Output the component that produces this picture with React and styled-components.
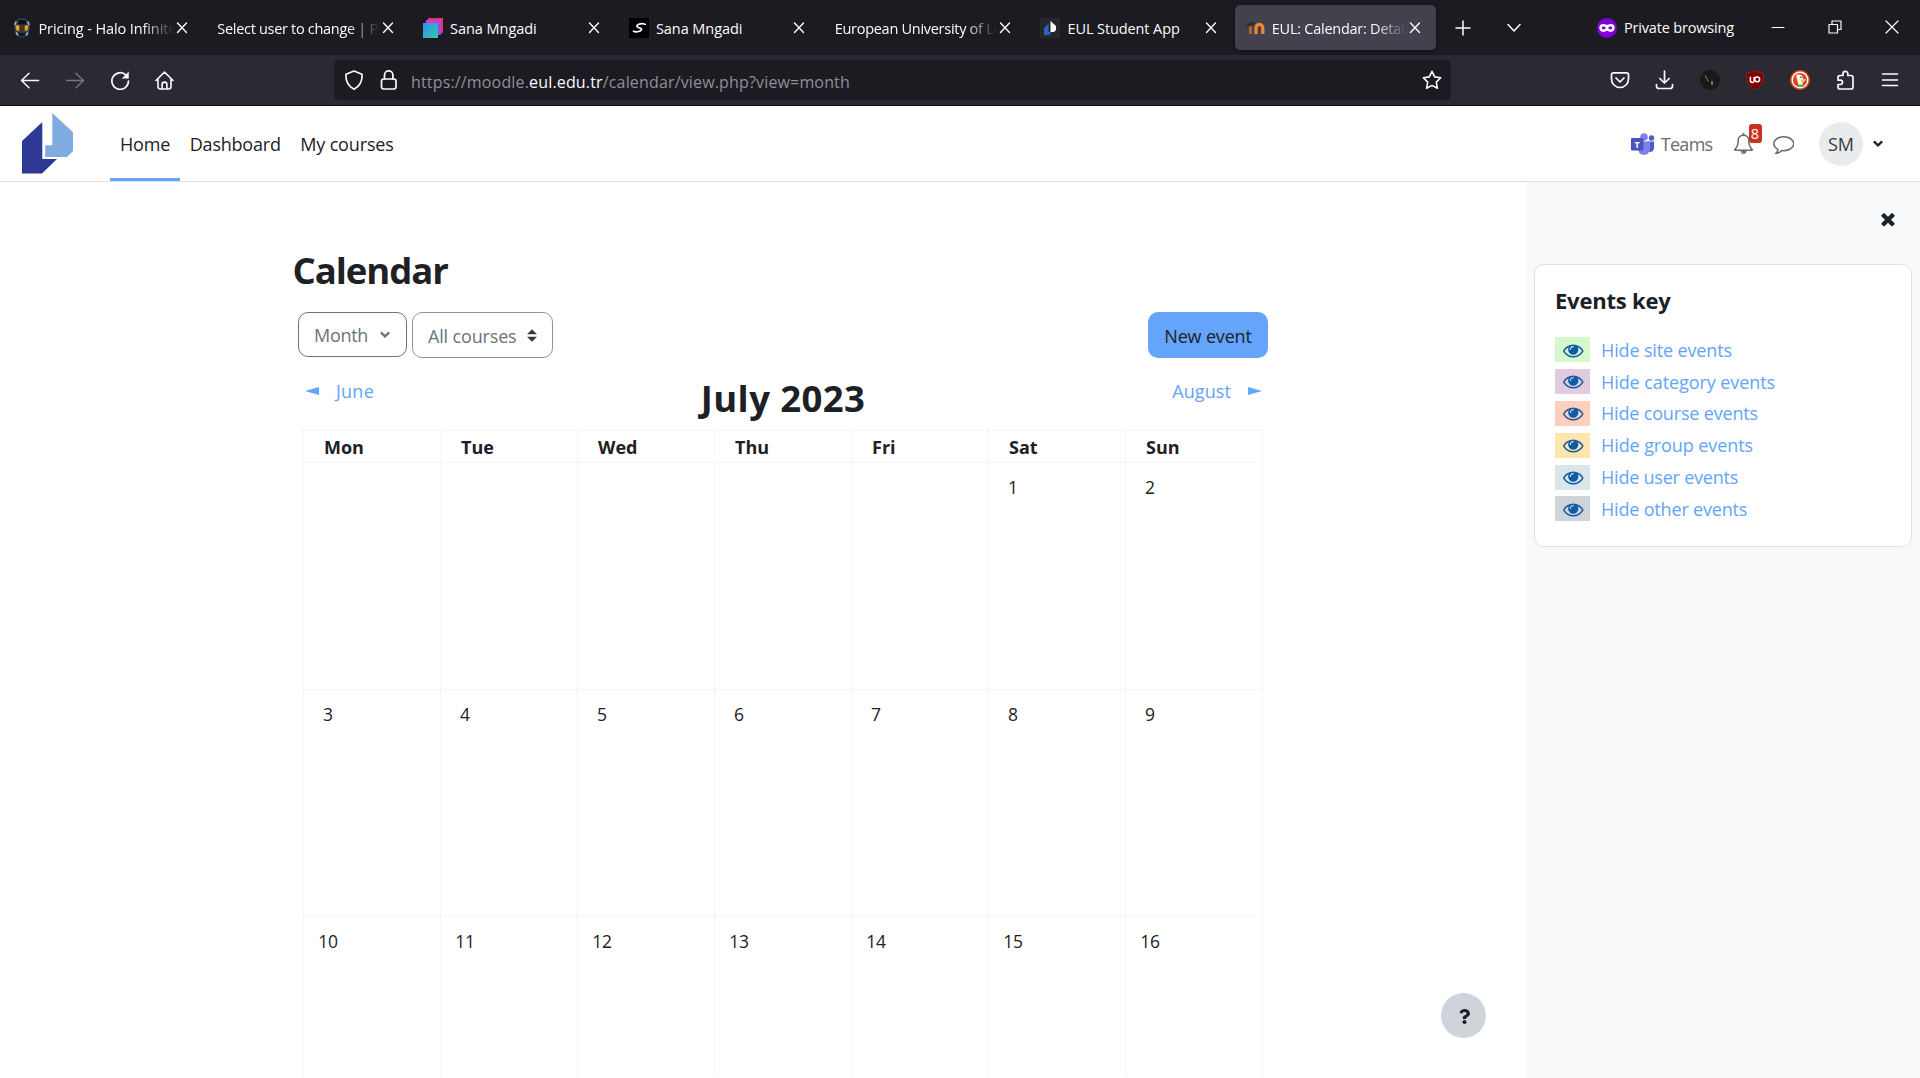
import React from "react";
import styled, { createGlobalStyle } from "styled-components";
import { FaQuestion } from "react-icons/fa";

const GlobalStyle = createGlobalStyle`
  *, *::before, *::after { box-sizing: border-box; }
  html, body { margin: 0; padding: 0; overflow: hidden; }
  body {
    font-family: "Open Sans", "Noto Sans", "Liberation Sans", sans-serif;
    font-size: 18px;
    color: #1d2125;
    background: #fff;
  }
  svg { display: block; flex: none; }
`;

const Label = styled.span`
  white-space: nowrap;
  letter-spacing: ${(p) => p.$ls || 0}px;
`;

const Screen = styled.div`
  width: 1920px;
  height: 1078px;
  display: flex;
  flex-direction: column;
  overflow: hidden;
`;

/* ---------- browser chrome ---------- */

const TabStrip = styled.div`
  height: 55px;
  flex: none;
  display: flex;
  align-items: center;
  background: #1c1b22;
  color: #fbfbfe;
`;

const Tabs = styled.div`
  display: flex;
  gap: 4.8px;
`;

const Tab = styled.div`
  width: 201px;
  height: 45px;
  padding: 1px ${(p) => (p.$active ? 15 : 13)}px 0 ${(p) => (p.$active ? 10 : 11.5)}px;
  border-radius: 5px;
  display: flex;
  align-items: center;
  gap: 7px;
  background: ${(p) => (p.$active ? "#42414d" : "transparent")};
  box-shadow: ${(p) => (p.$active ? "0 0 4px rgba(0, 0, 0, 0.5)" : "none")};
`;

const TabTitle = styled(Label)`
  flex: 1;
  min-width: 0;
  margin-right: -7px;
  padding-top: 1px;
  overflow: hidden;
  font-size: 14.5px;
  line-height: 22px;
  mask-image: ${(p) => (p.$fade ? "linear-gradient(to left, transparent 2px, #000 34px)" : "none")};
`;

const TabTools = styled.div`
  display: flex;
  align-items: center;
  gap: 36px;
  margin-left: 19px;
`;

const PrivateMark = styled.div`
  display: flex;
  align-items: center;
  gap: 7px;
  margin-left: auto;
  font-size: 14.5px;
`;

const WindowControls = styled.div`
  display: flex;
  align-items: center;
  gap: 43px;
  margin: 0 21px 2px 37px;
`;

const NavBar = styled.div`
  height: 51px;
  flex: none;
  display: flex;
  align-items: center;
  background: #2b2a33;
  border-bottom: 1px solid #0c0c0d;
  color: #fbfbfe;
`;

const NavButtons = styled.div`
  display: flex;
  gap: 25px;
  width: 334px;
  padding-left: 20px;
`;

const UrlBar = styled.div`
  width: 1117px;
  height: 40px;
  padding: 0 9px 0 10px;
  display: flex;
  align-items: center;
  border-radius: 5px;
  background: #1c1b22;
`;

const UrlIcons = styled.div`
  display: flex;
  gap: 15px;
`;

const Url = styled(Label)`
  flex: 1;
  margin-left: 12px;
  padding-top: 3px;
  font-size: 16px;
  color: #8f8f9a;
  b { font-weight: 400; color: #fbfbfe; }
`;

const Extensions = styled.div`
  display: flex;
  gap: 25px;
  margin-left: auto;
  padding-right: 20px;
`;

/* ---------- site header ---------- */

const SiteHeader = styled.header`
  height: 76px;
  flex: none;
  display: flex;
  align-items: stretch;
  border-bottom: 1px solid #dee2e6;
  padding: 0 36px 0 22px;
`;

const LogoBox = styled.div`
  width: 88px;
  padding-top: 7px;
`;

const PrimaryNav = styled.nav`
  display: flex;
`;

const NavItem = styled.a`
  display: flex;
  align-items: center;
  padding: 3px 9.5px 0 10px;
  border-bottom: 3px solid ${(p) => (p.$active ? "#64a4fb" : "transparent")};
`;

const UserTools = styled.div`
  display: flex;
  align-items: center;
  margin-left: auto;
  color: #6a6b6c;
`;

const TeamsLink = styled.a`
  display: flex;
  align-items: center;
  gap: 6px;
  margin-right: 20px;
`;

const BellBox = styled.div`
  position: relative;
  margin-right: 19px;
`;

const Badge = styled.span`
  position: absolute;
  top: -9px;
  left: 16px;
  width: 13px;
  height: 19px;
  border-radius: 3px;
  background: #ca3120;
  color: #fff;
  font-size: 14.5px;
  line-height: 20px;
  text-align: center;
`;

const Avatar = styled.div`
  width: 44px;
  height: 44px;
  margin: 0 9px 0 25px;
  border-radius: 50%;
  background: #e9ecef;
  color: #343a40;
  display: flex;
  align-items: center;
  justify-content: center;
`;

/* ---------- page ---------- */

const Body = styled.div`
  flex: 1;
  min-height: 0;
  display: flex;
`;

const Main = styled.main`
  width: 1526px;
  padding: 66px 258px 0 294px;
  display: flex;
  flex-direction: column;
  overflow: hidden;
`;

const PageTitle = styled.h1`
  margin: 0 0 0 -1.5px;
  font-size: 36.5px;
  line-height: 44px;
  letter-spacing: -1.05px;
  font-weight: 700;
`;

const Controls = styled.div`
  display: flex;
  align-items: flex-start;
  gap: 5px;
  margin: 20px 0 18px 4px;
`;

const Picker = styled.button`
  width: ${(p) => p.$w}px;
  height: ${(p) => p.$h}px;
  padding: ${(p) => (p.$h > 45 ? 1 : 0)}px 15px 0;
  display: flex;
  align-items: center;
  justify-content: space-between;
  border: 1px solid ${(p) => p.$edge};
  border-radius: 10px;
  background: #fff;
  color: #6a737b;
  font: inherit;
`;

const PrimaryButton = styled.button`
  width: 120px;
  height: 46px;
  margin-left: auto;
  padding: 1px 0 0;
  border: 0;
  border-radius: 10px;
  background: #64a4fb;
  color: #1d2125;
  font: inherit;
`;

const MonthNav = styled.div`
  height: 54px;
  flex: none;
  display: grid;
  grid-template-columns: 1fr auto 1fr;
  margin: 0 5px 0 9px;
`;

const MonthLink = styled.a`
  display: flex;
  align-items: center;
  justify-content: ${(p) => (p.$end ? "flex-end" : "flex-start")};
  gap: 17px;
  height: 30px;
  padding: 0 ${(p) => (p.$end ? 1 : 0)}px 0 ${(p) => (p.$end ? 0 : 2)}px;
  color: #64a4fb;
`;

const MonthTitle = styled.h2`
  margin: 0;
  font-size: 36.5px;
  line-height: 45px;
  letter-spacing: 0.4px;
  font-weight: 700;
`;

const Grid = styled.div`
  flex: none;
  display: grid;
  grid-template-columns: repeat(7, 137px);
  grid-template-rows: 32px 227px 226px 226px;
  width: 960px;
  margin-left: 9px;
  border-right: 1px dotted #eceef0;
`;

const WeekDay = styled.div`
  border-top: 1px dotted #eceef0;
  border-left: 1px dotted #eceef0;
  padding: 2px 0 0 20px;
  font-weight: 700;
  line-height: 28px;
`;

const DayCell = styled.div`
  border-top: 1px dotted #eceef0;
  border-left: 1px dotted #eceef0;
  padding-top: ${(p) => (p.$low ? 1 : 0)}px;
`;

const DayNumber = styled.div`
  width: 48px;
  line-height: 48px;
  text-align: center;
  font-size: 17.5px;
  letter-spacing: -0.2px;
`;

const HelpButton = styled.button`
  position: absolute;
  left: 1441px;
  top: 993px;
  width: 45px;
  height: 45px;
  border: 0;
  border-radius: 50%;
  background: #ced4da;
  color: #1d2125;
  display: flex;
  align-items: center;
  justify-content: center;
  padding: 1px 0 0 1px;
`;

const Drawer = styled.aside`
  width: 394px;
  background: #f8f9fa;
  padding: 27px 8px 0;
  display: flex;
  flex-direction: column;
`;

const DrawerTop = styled.div`
  display: flex;
  justify-content: flex-end;
  height: 55px;
  padding-right: 14px;
`;

const Card = styled.section`
  height: 283px;
  padding: 20px 21px 0 20px;
  border: 1px solid #dee2e6;
  border-radius: 10px;
  background: #fff;
`;

const CardTitle = styled.h3`
  margin: 0 0 19px 0;
  font-size: 22px;
  line-height: 30px;
  letter-spacing: -0.22px;
  font-weight: 700;
`;

const KeyRow = styled.div`
  display: flex;
  align-items: center;
  gap: 11px;
  height: 31.8px;
  color: #64a4fb;
`;

const Swatch = styled.span`
  width: 35px;
  height: 25px;
  display: flex;
  align-items: center;
  justify-content: center;
  padding-left: 2px;
  background: ${(p) => p.$color};
  color: #0f5ca5;
`;

/* ---------- icons ---------- */

const Line = ({ w = 20, h = w, box = `0 0 ${w} ${h}`, sw = 1.5, color = "currentColor", children }) => (
  <svg width={w} height={h} viewBox={box} fill="none" stroke={color} strokeWidth={sw} strokeLinecap="round" strokeLinejoin="round">
    {children}
  </svg>
);

const Solid = ({ size, d, color = "currentColor" }) => (
  <svg width={size} height={size} viewBox="0 0 1792 1792" fill={color}>
    <path d={d} />
  </svg>
);

const EYE =
  "M1664 960q-152-236-381-353 61 104 61 225 0 185-131.5 316.5t-316.5 131.5-316.5-131.5-131.5-316.5q0-121 61-225-229 117-381 353 133 205 333.5 326.5t434.5 121.5 434.5-121.5 333.5-326.5zm-720-384q0-20-14-34t-34-14q-125 0-214.5 89.5t-89.5 214.5q0 20 14 34t34 14 34-14 14-34q0-86 61-147t147-61q20 0 34-14t14-34zm848 384q0 34-20 69-140 230-376.5 368.5t-499.5 138.5-499.5-139-376.5-368q-20-35-20-69t20-69q140-229 376.5-368t499.5-139 499.5 139 376.5 368q20 35 20 69z";
const BELL =
  "M912 1696q0-16-16-16-59 0-101.5-42.5t-42.5-101.5q0-16-16-16t-16 16q0 73 51.5 124.5t124.5 51.5q16 0 16-16zm-666-288h1300q-266-300-266-832 0-51-24-105t-69-103-121.5-80.5-169.5-31.5-169.5 31.5-121.5 80.5-69 103-24 105q0 532-266 832zm1482 0q0 52-38 90t-90 38h-448q0 106-75 181t-181 75-181-75-75-181h-448q-52 0-90-38t-38-90q50-42 91-88t85-119.5 74.5-158.5 50-206 19.5-260q0-152 117-282.5t307-158.5q-8-19-8-39 0-40 28-68t68-28 68 28 28 68q0 20-8 39 190 28 307 158.5t117 282.5q0 139 19.5 260t50 206 74.5 158.5 85 119.5 91 88z";
const COMMENT =
  "M896 384q-204 0-381.5 69.5t-282 187.5-104.5 255q0 112 71.5 213.5t201.5 175.5l87 50-27 96q-24 91-70 172 152-63 275-171l43-38 57 6q69 8 130 8 204 0 381.5-69.5t282-187.5 104.5-255-104.5-255-282-187.5-381.5-69.5zm896 512q0 174-120 321.5t-326 233-450 85.5q-70 0-145-8-198 175-460 242-49 14-114 22h-5q-15 0-27-10.5t-16-27.5v-1q-3-4-.5-12t2-10 4.5-9.5l6-9 7-8.5 8-9q7-8 31-34.5t34.5-38 31-39.5 32.5-51 27-59 26-76q-157-89-247.5-220t-90.5-281q0-174 120-321.5t326-233 450-85.5 450 85.5 326 233 120 321.5z";
const TIMES =
  "M1490 1322q0 40-28 68l-136 136q-28 28-68 28t-68-28l-294-294-294 294q-28 28-68 28t-68-28l-136-136q-28-28-28-68t28-68l294-294-294-294q-28-28-28-68t28-68l136-136q28-28 68-28t68 28l294 294 294-294q28-28 68-28t68 28l136 136q28 28 28 68t-28 68l-294 294 294 294q28 28 28 68z";

const TabClose = () => (
  <Line w={12} sw={1.4}><path d="M1.5 1l9 9.5M10.5 1l-9 9.5" /></Line>
);

const HelmetIcon = () => (
  <svg width="20" height="20" viewBox="0 0 20 20">
    <path d="M7 0.500h6l4 3.500 1 6-2 6-4 3.500H8L4 16l-2-6 1-6z" fill="#39465a" />
    <path d="M6.500 2h7l1 4.500h-9z" fill="#0e1119" />
    <path d="M4 3.500L2.800 7M16 3.500L17.200 7M4 14.500l2 3M16 14.500l-2 3" stroke="#a3b4ca" strokeWidth="1.500" />
    <path d="M3.500 7.500h4v5h-3zM16.500 7.500h-4v5h3z" fill="#f0a81c" />
    <path d="M7.500 7h5v6.500h-5z" fill="#4c3210" />
    <path d="M6 14.500h8l-1.500 4h-5z" fill="#151a24" />
  </svg>
);

const LayersIcon = () => (
  <svg width="20" height="20" viewBox="0 0 20 20">
    <defs>
      <linearGradient id="layer-c" x1="0" y1="0" x2="1" y2="1">
        <stop offset="0" stopColor="#2f8fe8" /><stop offset="1" stopColor="#35c9ae" />
      </linearGradient>
      <linearGradient id="layer-b" x1="0" y1="0" x2="1" y2="1">
        <stop offset="0" stopColor="#e23cc0" /><stop offset="1" stopColor="#8f4bf2" />
      </linearGradient>
    </defs>
    <path d="M5 0h15v15H5z" fill="#e0366f" />
    <path d="M3 2h15v15H3z" fill="url(#layer-b)" />
    <path d="M0 5h15v15H0z" fill="url(#layer-c)" />
  </svg>
);

const ScriptIcon = () => (
  <svg width="20" height="20" viewBox="0 0 20 20">
    <path d="M0 0h20v20H0z" fill="#000" />
    <path d="M16.500 7c0-2-7-1.800-8.500.5s5.500 2 4.500 4.200-6 2.800-8.500 1.300" fill="none" stroke="#fff" strokeWidth="1.600" />
  </svg>
);

const AppIcon = () => (
  <svg width="20" height="20" viewBox="0 0 20 20">
    <path d="M0 0h20v20H0z" fill="#26272c" />
    <path d="M8.500 5.500v8.500h3L9 17H4V10z" fill="#2465c4" />
    <path d="M10.500 3l5.500 5v4l-2 2h-3.500z" fill="#fff" />
  </svg>
);

const MoodleIcon = () => (
  <svg width="20" height="20" viewBox="0 0 20 20" fill="none">
    <path d="M5.500 16V7" stroke="#a7643a" strokeWidth="3" />
    <path d="M11 16V9.800a3.400 3.400 0 0 1 6.800 0V16" stroke="#ef8a2c" strokeWidth="3.200" />
    <path d="M1 6.500l7-2.500 3 1.500-6 3z" fill="#2d2c34" />
    <path d="M1.500 7v5" stroke="#35343c" />
  </svg>
);

const MaskIcon = () => (
  <svg width="20" height="20" viewBox="0 0 20 20">
    <circle cx="10" cy="10" r="10" fill="#8000d7" />
    <path d="M6.200 6C3.600 6 2.300 7.500 2.300 9.600c0 2.600 1.600 4.400 3.900 4.400 1.700 0 2.400-1.300 3.800-1.300s2.100 1.300 3.800 1.300c2.300 0 3.900-1.800 3.900-4.400C17.700 7.500 16.400 6 13.800 6c-1.700 0-2.600.8-3.800.8S7.900 6 6.200 6z" fill="#fff" />
    <ellipse cx="6.700" cy="10" rx="2" ry="1.400" fill="#8000d7" />
    <ellipse cx="13.300" cy="10" rx="2" ry="1.400" fill="#8000d7" />
  </svg>
);

const Logo = () => (
  <svg width="51" height="61" viewBox="0 0 51 61">
    <path d="M0 28L20.300 9v37H35L20 60.600H0z" fill="#2e3996" />
    <path d="M30.300 0L51 19.200V38l-6 6H23.200V32.200h7.100z" fill="#80abdf" />
  </svg>
);

const TeamsIcon = () => (
  <svg width="24" height="22" viewBox="0 0 24 22">
    <circle cx="20.500" cy="5" r="2.700" fill="#5059c9" />
    <path d="M16 8.500h7v7a4 4 0 0 1-7 2z" fill="#5059c9" />
    <circle cx="13" cy="4" r="3.800" fill="#7b83eb" />
    <path d="M7 8.500h12v7.500a6 6 0 0 1-12 0z" fill="#7b83eb" />
    <rect y="5" width="12.500" height="12.500" rx="1" fill="#4b53bc" />
    <text x="6.200" y="14.500" fontSize="9" fontWeight="700" textAnchor="middle" fill="#fff">T</text>
  </svg>
);

const Caret = ({ color = "#1d2125" }) => (
  <Line w={12} h={9} box="0 0 12 9" sw={2.3} color={color}><path d="M1.800 2.300L6 6.300l4.200-4" strokeLinecap="butt" strokeLinejoin="miter" /></Line>
);

/* ---------- data ---------- */

const TABS = [
  { icon: <HelmetIcon />, title: "Pricing - Halo Infinite", fade: true, ls: -0.1 },
  { title: "Select user to change | Python", fade: true, ls: -0.3 },
  { icon: <LayersIcon />, title: "Sana Mngadi", ls: -0.05 },
  { icon: <ScriptIcon />, title: "Sana Mngadi", ls: -0.05 },
  { title: "European University of Lefke", fade: true, ls: -0.28 },
  { icon: <AppIcon />, title: "EUL Student App", ls: -0.1 },
  { icon: <MoodleIcon />, title: "EUL: Calendar: Detailed", fade: true, active: true, ls: -0.25 },
];

const WEEKDAYS = ["Mon", "Tue", "Wed", "Thu", "Fri", "Sat", "Sun"];
const DAYS = ["", "", "", "", "", 1, 2, 3, 4, 5, 6, 7, 8, 9, 10, 11, 12, 13, 14, 15, 16];

const KEYS = [
  ["Hide site events", "#d6f8cd", -0.14],
  ["Hide category events", "#e0cbe0", -0.08],
  ["Hide course events", "#fecfbd", -0.17],
  ["Hide group events", "#fde6ae", -0.09],
  ["Hide user events", "#dae6ea", -0.22],
  ["Hide other events", "#ced4da", -0.18],
];

/* ---------- sections ---------- */

function BrowserTabs() {
  return (
    <TabStrip>
      <Tabs>
        {TABS.map((t, i) => (
          <Tab key={i} $active={t.active}>
            {t.icon}
            <TabTitle $ls={t.ls} $fade={t.fade}>{t.title}</TabTitle>
            <TabClose />
          </Tab>
        ))}
      </Tabs>
      <TabTools>
        <Line w={16} sw={1.5}><path d="M8 1v14M1 8h14" /></Line>
        <Line w={14} sw={1.5}><path d="M1 3.500L7 10l6-6.500" /></Line>
      </TabTools>
      <PrivateMark>
        <MaskIcon />
        <Label $ls={-0.17}>Private browsing</Label>
      </PrivateMark>
      <WindowControls>
        <Line w={14} sw={1.2}><path d="M1 7.500h12" /></Line>
        <Line w={14} sw={1.2}><path d="M1 4.500h8.500V13H1zM4 4.500V1h9v8.500H9.500" /></Line>
        <Line w={14} sw={1.2}><path d="M1 1l12 12M13 1L1 13" /></Line>
      </WindowControls>
    </TabStrip>
  );
}

function BrowserNav() {
  return (
    <NavBar>
      <NavButtons>
        <Line><path d="M18.500 10.500H1.500M9 3.300l-7.500 7.200 7.500 7.200" /></Line>
        <Line color="#77767f"><path d="M1.500 10.500h17M11 3.300l7.500 7.200-7.500 7.200" /></Line>
        <Line sw={1.7}><path d="M18.500 11A8.300 8.300 0 1 1 16 5.100" /><path d="M18.500 2.300v6h-6z" fill="currentColor" strokeWidth="0.500" /></Line>
        <Line sw={1.6}><path d="M1 10.500L9.500 2 18 10.500M3 9v7.500A2.500 2.500 0 0 0 5.500 19h8a2.500 2.500 0 0 0 2.500-2.500V9M7.100 19v-4.500a2.400 2.400 0 0 1 4.800 0V19" /></Line>
      </NavButtons>
      <UrlBar>
        <UrlIcons>
          <Line sw={1.7}><path d="M10 1L18 4.200c.5 6.300-2 11.800-8 15-6-3.200-8.500-8.700-8-15z" /></Line>
          <Line sw={1.7}><rect x="2.500" y="9" width="14.500" height="10" rx="2.200" /><path d="M5.500 9V5a4.200 4.200 0 0 1 8.400 0v4" /></Line>
        </UrlIcons>
        <Url $ls={0.16}>https://moodle.<b>eul.edu.tr</b>/calendar/view.php?view=month</Url>
        <Line sw={1.6}><path d="M10 1.300l2.700 5.600 6 .9-4.400 4.300 1.100 6.200L10 15.400l-5.400 2.900 1.100-6.200L1.300 7.800l6-.9z" /></Line>
      </UrlBar>
      <Extensions>
        <Line sw={1.7}><path d="M3.500 2.800h13a2 2 0 0 1 2 2V9a8.500 8.500 0 0 1-17 0V4.800a2 2 0 0 1 2-2z" /><path d="M6 8l4 4 4-4" /></Line>
        <Line sw={1.7}><path d="M9.500 1v12M4.800 8.500L9.500 13l4.700-4.500M1.500 14.500V16A2.500 2.500 0 0 0 4 18.500h11a2.500 2.500 0 0 0 2.500-2.500v-1.500" /></Line>
        <svg width="20" height="20"><circle cx="10" cy="10" r="10" fill="#191919" /><path d="M5 5.500l3.500 6" stroke="#94604f" strokeWidth="1.200" /><path d="M12 11v4" stroke="#c9937c" strokeWidth="1.300" /></svg>
        <svg width="20" height="20" viewBox="0 0 20 20">
          <path d="M10 .5c2.500 1.700 5.500 2.200 8.500 2.200C19.300 11 17 16.500 10 19.700 3 16.500.7 11 1.500 2.700c3 0 6-.5 8.500-2.200z" fill="#800000" stroke="#6d3137" strokeWidth="0.800" />
          <path d="M5.400 6.800v3.800a1.700 1.700 0 0 0 3.700 0V6.800" fill="none" stroke="#fff" strokeWidth="1.500" />
          <rect x="9.800" y="7" width="4.800" height="4.800" rx="2.200" fill="none" stroke="#fff" strokeWidth="1.500" />
        </svg>
        <svg width="20" height="20" viewBox="0 0 20 20">
          <circle cx="10" cy="10" r="10" fill="#de4322" /><circle cx="10" cy="10" r="7.800" fill="none" stroke="#fff" strokeWidth="1.400" />
          <path d="M6 5.500C8 3.500 13 4 13 9l-.5 7.500H9z" fill="#fff" /><path d="M11 9.500l5-.5-1 2.500-4 .5z" fill="#fc3" />
          <path d="M8.500 14.500h5V17h-4z" fill="#4cba3c" /><circle cx="11" cy="7.300" r=".9" fill="#2d4f8e" />
        </svg>
        <Line sw={1.7}><path d="M8 5.500V3.700a2.400 2.400 0 0 1 4.800 0v1.800H16a2 2 0 0 1 2 2V17a2 2 0 0 1-2 2H5a2 2 0 0 1-2-2v-2.500h2.300a2.200 2.200 0 0 0 0-4.400H3V7.500a2 2 0 0 1 2-2z" /></Line>
        <Line sw={1.5}><path d="M2.500 4h15M2.500 10h15M2.500 15.500h15" /></Line>
      </Extensions>
    </NavBar>
  );
}

function Header() {
  return (
    <SiteHeader>
      <LogoBox><Logo /></LogoBox>
      <PrimaryNav>
        <NavItem $active><Label $ls={-0.15}>Home</Label></NavItem>
        <NavItem><Label $ls={-0.22}>Dashboard</Label></NavItem>
        <NavItem><Label $ls={-0.15}>My courses</Label></NavItem>
      </PrimaryNav>
      <UserTools>
        <TeamsLink><TeamsIcon /><Label $ls={-0.7}>Teams</Label></TeamsLink>
        <BellBox>
          <Solid size={21} d={BELL} />
          <Badge>8</Badge>
        </BellBox>
        <Solid size={21.5} d={COMMENT} />
        <Avatar><Label>SM</Label></Avatar>
        <Caret />
      </UserTools>
    </SiteHeader>
  );
}

function CalendarPage() {
  return (
    <Main>
      <PageTitle>Calendar</PageTitle>
      <Controls>
        <Picker $w={109} $h={45} $edge="#6a737b"><Label $ls={-0.3}>Month</Label><Caret color="#6a737b" /></Picker>
        <Picker $w={141} $h={46} $edge="#8f959e">
          <Label $ls={-0.16}>All courses</Label>
          <svg width="10" height="13" viewBox="0 0 10 13" fill="#343a40"><path d="M0 5.300L5 .3l5 5zM0 7.700h10l-5 5z" /></svg>
        </Picker>
        <PrimaryButton><Label $ls={-0.16}>New event</Label></PrimaryButton>
      </Controls>
      <MonthNav>
        <MonthLink>
          <svg width="14" height="8" viewBox="0 0 14 8" fill="currentColor"><path d="M0 4L14 0v8z" /></svg>
          <Label $ls={0.25}>June</Label>
        </MonthLink>
        <MonthTitle>July 2023</MonthTitle>
        <MonthLink $end>
          <Label $ls={0.1}>August</Label>
          <svg width="14" height="8" viewBox="0 0 14 8" fill="currentColor"><path d="M14 4L0 0v8z" /></svg>
        </MonthLink>
      </MonthNav>
      <Grid>
        {WEEKDAYS.map((d) => <WeekDay key={d}>{d}</WeekDay>)}
        {DAYS.map((d, i) => <DayCell key={i} $low={i > 13}><DayNumber>{d}</DayNumber></DayCell>)}
      </Grid>
    </Main>
  );
}

function EventsDrawer() {
  return (
    <Drawer>
      <DrawerTop><Solid size={20} d={TIMES} /></DrawerTop>
      <Card>
        <CardTitle>Events key</CardTitle>
        {KEYS.map(([text, color, ls]) => (
          <KeyRow key={text}>
            <Swatch $color={color}><Solid size={20.5} d={EYE} /></Swatch>
            <Label $ls={ls}>{text}</Label>
          </KeyRow>
        ))}
      </Card>
    </Drawer>
  );
}

export default function App() {
  return (
    <>
      <GlobalStyle />
      <Screen>
        <BrowserTabs />
        <BrowserNav />
        <Header />
        <Body>
          <CalendarPage />
          <EventsDrawer />
        </Body>
        <HelpButton><FaQuestion size={15} /></HelpButton>
      </Screen>
    </>
  );
}
